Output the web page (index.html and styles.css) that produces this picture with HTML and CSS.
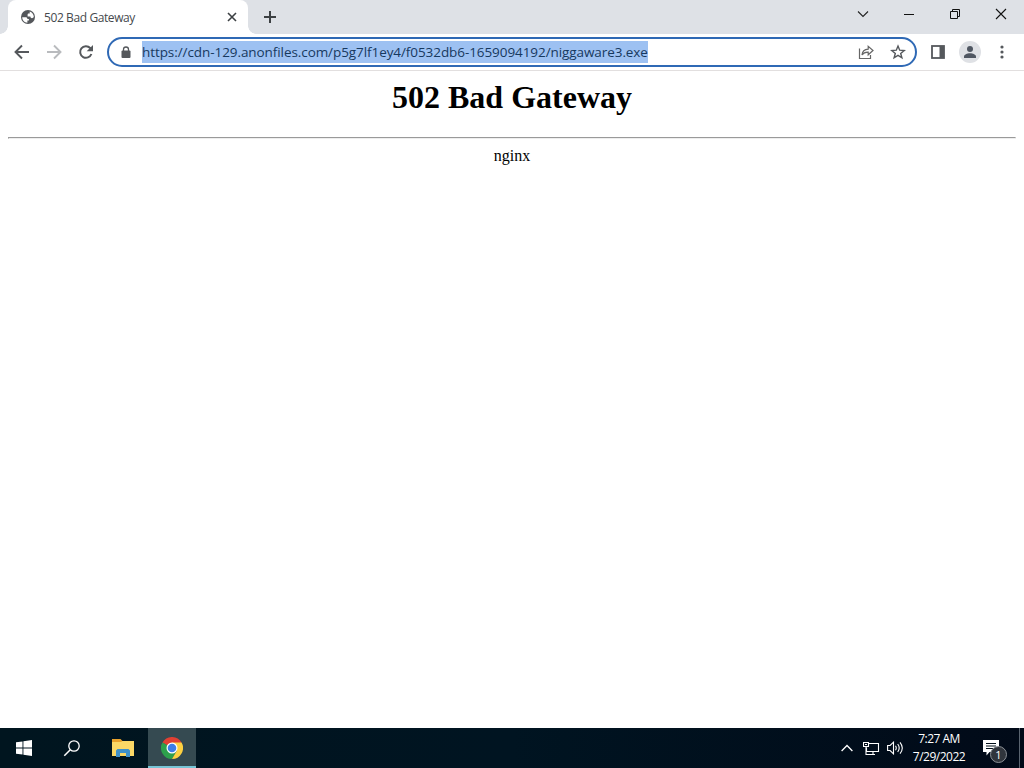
FILE: index.html
```html
<!DOCTYPE html>
<html>
<head>
    <title>502 Bad Gateway</title>
    <meta charset="UTF-8">
    <link rel="stylesheet" href="styles.css">
</head>
<body>
    <div class="tabstrip">
        <div class="tab">
            <svg class="favicon" width="16" height="16" viewBox="0 0 16 16">
                <circle cx="8" cy="8" r="7" fill="#54575b"/>
                <path d="M2.2 8.2h3.2c1.5 0 2 .7 2 1.7h1.5v1.5H7.4v2.3C4.4 13.5 2.2 11 2.2 8.2zM9.7 2.500c2.300.7 4 2.800 4.100 5.300-.5 1-1 1.400-1.800 1.400-1 0-1.600-.6-1.600-1.600H7.600V5.700c0-.7.5-1.100 1.100-1.100h1z" fill="#fff"/>
            </svg>
            <span class="tab-title">502 Bad Gateway</span>
            <svg width="10" height="10" viewBox="0 0 10 10">
                <path d="M1 1l8 8M9 1l-8 8" stroke="#3c4043" stroke-width="1.6"/>
            </svg>
        </div>
        <svg class="newtab" width="14" height="14" viewBox="0 0 14 14">
            <path d="M7 1v12M1 7h12" stroke="#3c4043" stroke-width="2"/>
        </svg>
        <div class="window-buttons">
            <svg width="46" height="28" viewBox="0 0 46 28">
                <path d="M18 11.500l5 5 5-5" fill="none" stroke="#222" stroke-width="1.1"/>
            </svg>
            <svg width="46" height="28" viewBox="0 0 46 28">
                <path d="M18 14.500h10" stroke="#111"/>
            </svg>
            <svg width="46" height="28" viewBox="0 0 46 28">
                <path d="M18.500 11.500h7v7h-7zM20.500 11.500v-2h7v7h-2" fill="none" stroke="#111"/>
            </svg>
            <svg width="46" height="28" viewBox="0 0 46 28">
                <path d="M18 9l10 10M28 9L18 19" stroke="#111" stroke-width="1.1"/>
            </svg>
        </div>
    </div>

    <div class="toolbar">
        <div class="nav">
            <svg width="16" height="16" viewBox="0 0 16 16">
                <path d="M15 8H2M8 1.500L1.500 8 8 14.500" fill="none" stroke="#55585c" stroke-width="1.9"/>
            </svg>
            <svg width="16" height="16" viewBox="0 0 16 16">
                <path d="M1 8h13M8 1.500L14.500 8 8 14.500" fill="none" stroke="#b9bbbe" stroke-width="1.9"/>
            </svg>
            <svg width="16" height="16" viewBox="0 0 16 16">
                <path d="M13.400 10A5.800 5.800 0 1 1 12.200 4L13.300 5.200" fill="none" stroke="#55585c" stroke-width="2"/>
                <path d="M15 1v6.300H8.700z" fill="#55585c"/>
            </svg>
        </div>
        <div class="omnibox">
            <svg class="lock" width="10" height="13" viewBox="0 0 10 13">
                <path d="M2.500 6V3.500a2.500 2.500 0 0 1 5 0V6" fill="none" stroke="#55585c" stroke-width="1.3"/>
                <rect x="0.5" y="4.5" width="9" height="7.5" rx="1" fill="#55585c"/>
            </svg>
            <span class="url">https://cdn-129.anonfiles.com/p5g7lf1ey4/f0532db6-1659094192/niggaware3.exe</span>
            <svg class="share" width="16" height="16" viewBox="0 0 16 16">
                <path d="M1.500 4.500v10h11V11" fill="none" stroke="#666" stroke-width="1.2"/>
                <path d="M4 11c.3-3.700 2.300-5.800 6.200-5.900V2.300L15 6.500l-4.800 4.300V8.200C7.300 8.100 5.300 9 4 11z" fill="none" stroke="#666" stroke-width="1.2"/>
            </svg>
            <svg class="star" width="16" height="16" viewBox="0 0 16 16">
                <path d="M8 2l1.700 4.200 4.500.3-3.500 2.900 1.200 4.400L8 11.400l-3.900 2.400 1.200-4.400-3.500-2.900 4.500-.3z" fill="none" stroke="#55585c" stroke-width="1.4"/>
            </svg>
        </div>
        <svg class="sidepanel" width="14" height="14" viewBox="0 0 14 14">
            <rect x="1" y="1" width="12" height="12" fill="#fff" stroke="#55585c" stroke-width="1.8"/>
            <path d="M8.500 1H13v12H8.500z" fill="#55585c"/>
        </svg>
        <svg class="avatar" width="22" height="22" viewBox="0 0 22 22">
            <circle cx="11" cy="11" r="11" fill="#dfe1e5"/>
            <circle cx="11" cy="8" r="3" fill="#505762"/>
            <path d="M5 17v-1.500c0-2 3-3.300 6-3.300s6 1.300 6 3.300V17z" fill="#505762"/>
        </svg>
        <svg class="more" width="4" height="14" viewBox="0 0 4 14">
            <g fill="#55585c"><circle cx="2" cy="2" r="1.6"/><circle cx="2" cy="7" r="1.6"/><circle cx="2" cy="12" r="1.6"/></g>
        </svg>
    </div>

    <div class="page">
        <h1>502 Bad Gateway</h1>
        <hr>
        <div class="server">nginx</div>
    </div>

    <div class="taskbar">
        <div class="task">
            <svg width="16" height="16" viewBox="0 0 16 16">
                <path d="M0 2.300L6.500 1.400V7.500H0zM7.400 1.200L16 0v7.500H7.400zM0 8.500h6.500v6.100L0 13.700zM7.400 8.500H16V16l-8.600-1.200z" fill="#fff"/>
            </svg>
        </div>
        <div class="task">
            <svg width="18" height="18" viewBox="0 0 18 18">
                <circle cx="11" cy="7" r="5.2" fill="none" stroke="#fff" stroke-width="1.3"/>
                <path d="M7.300 10.700L1.300 16.700" stroke="#fff" stroke-width="1.5"/>
            </svg>
        </div>
        <div class="task folder">
            <svg width="22" height="18" viewBox="0 0 22 18">
                <path d="M0 0h8.500l2 2H21v4H0z" fill="#e9a22c"/>
                <path d="M0 3h9l1.500-1H22v15H0z" fill="#fbd866"/>
                <path d="M4 18v-6.500l1.500-1.500h11l1.500 1.500V18h-4v-4H8v4z" fill="#3f91c9"/>
            </svg>
        </div>
        <div class="task active">
            <svg width="22" height="22" viewBox="0 0 22 22">
                <path d="M11 11L1.470 5.500A11 11 0 0 1 20.530 5.500z" fill="#e14033"/>
                <path d="M11 11L1.470 5.500A11 11 0 0 0 11 22L15.800 13.700z" fill="#2da04c"/>
                <path d="M11 5.500h9.530A11 11 0 0 1 11 22l4.800-8.300z" fill="#fdd041"/>
                <circle cx="11" cy="11" r="5.5" fill="#fff"/>
                <circle cx="11" cy="11" r="4.3" fill="#3e7de8"/>
            </svg>
        </div>
        <div class="tray">
            <svg class="chevron" width="12" height="8" viewBox="0 0 12 8">
                <path d="M.6 7L6 1.500 11.400 7" fill="none" stroke="#fff" stroke-width="1.3"/>
            </svg>
            <svg class="network" width="17" height="15" viewBox="0 0 17 15">
                <path d="M5.500 2.500h10v8H3.500v-4M.5 1.500h5v4h-5zM3 5.500v8h9M10 10.500v3" fill="none" stroke="#fff" stroke-width="1.1"/>
                <path d="M2 3.500h2" stroke="#fff"/>
            </svg>
            <svg class="volume" width="17" height="14" viewBox="0 0 17 14">
                <path d="M.6 4.500h2.500L6.500 1.200v11.600L3.100 9.500H.6z" fill="none" stroke="#fff" stroke-width="1.1"/>
                <path d="M8.500 4.800q1.500 2.200 0 4.400M10.700 3q3 4 0 8M13 1.300q4.600 5.700 0 11.400" fill="none" stroke="#fff" stroke-width="1.1"/>
            </svg>
            <div class="clock">
                <div class="time">7:27 AM</div>
                <div class="date">7/29/2022</div>
            </div>
            <div class="notify">
                <svg width="16" height="16" viewBox="0 0 16 16">
                    <path d="M0 0h16v12H6.500L3.500 15.500V12H0z" fill="#fff"/>
                    <path d="M3 3.500h10M3 6h10M3 8.500h7" stroke="#02101b"/>
                </svg>
                <span class="badge">1</span>
            </div>
        </div>
    </div>
</body>
</html>
```
FILE: styles.css
```css
body {
    margin: 0;
    height: 768px;
    display: flex;
    flex-direction: column;
    overflow: hidden;
    background-color: #fff;
    font-family: "Open Sans", "Noto Sans", sans-serif;
}

svg {
    display: block;
    flex-shrink: 0;
}

.tabstrip {
    display: flex;
    height: 34px;
    background-color: #dee1e6;
}

.tab {
    display: flex;
    align-items: center;
    box-sizing: border-box;
    width: 240px;
    height: 34px;
    margin-left: 8px;
    padding: 0 11px 0 12px;
    border-radius: 8px 8px 0 0;
    background-color: #fff;
    position: relative;
}

/* curved feet of the active tab */
.tab::before, .tab::after {
    content: "";
    position: absolute;
    bottom: 0;
    width: 8px;
    height: 8px;
}

.tab::before {
    left: -8px;
    background: radial-gradient(circle at 0 0, #dee1e6 7.5px, #fff 8px);
}

.tab::after {
    right: -8px;
    background: radial-gradient(circle at 100% 0, #dee1e6 7.5px, #fff 8px);
}

.tab-title {
    flex: 1;
    margin-left: 8px;
    font-size: 12px;
    letter-spacing: -0.4px;
    color: #45494d;
}

.newtab {
    margin: 10px 0 0 15px;
}

.window-buttons {
    display: flex;
    margin-left: auto;
}

.toolbar {
    display: flex;
    align-items: center;
    box-sizing: border-box;
    height: 37px;
    padding-left: 14px;
    border-bottom: 1px solid #e2dfdf;
}

.nav {
    display: flex;
    gap: 16px;
}

.omnibox {
    display: flex;
    align-items: center;
    box-sizing: border-box;
    width: 810px;
    height: 30px;
    margin-left: 13px;
    padding: 0 9px 0 12px;
    border: 2px solid #2f69b5;
    border-radius: 15px;
}

.url {
    margin-left: 11px;
    height: 22px;
    line-height: 22px;
    font-size: 13.5px;
    letter-spacing: -0.075px;
    white-space: nowrap;
    color: #17395f;
    background-color: #9dc1f2;
}

.share {
    margin-left: auto;
}

.star {
    margin-left: 16px;
}

.sidepanel {
    margin-left: 14px;
}

.avatar {
    margin-left: 14px;
}

.more {
    margin-left: 19px;
}

.page {
    flex: 1;
    padding: 8px;
    text-align: center;
    font-family: "Liberation Serif", "Times New Roman", serif;
    font-size: 16px;
    color: #000;
}

.page h1 {
    margin: 0 0 21px;
    font-size: 32px;
    line-height: 37px;
}

.page hr {
    margin: 0 0 8px;
}

.taskbar {
    display: flex;
    height: 40px;
    background: linear-gradient(to right, #00151f, #001421 50%, #010a18);
}

.task {
    display: flex;
    align-items: center;
    justify-content: center;
    box-sizing: border-box;
    width: 48px;
    height: 40px;
}

.folder {
    width: 52px;
    padding-left: 2px;
}

.active {
    background-color: #354a51;
    border-bottom: 2px solid #76c5d6;
}

.active svg {
    margin-top: 2px;
}

.tray {
    display: flex;
    align-items: center;
    box-sizing: border-box;
    margin-left: auto;
    width: 184px;
    margin-right: 4px;
    border-right: 1px solid #5a6470;
    color: #fff;
}

.chevron {
    margin-left: 5px;
}

.network {
    margin-left: 10px;
}

.volume {
    margin-left: 7px;
}

.clock {
    width: 60px;
    margin-left: 5px;
    text-align: center;
    font-size: 12px;
    line-height: 18px;
    letter-spacing: -0.5px;
    white-space: nowrap;
}

.notify {
    position: relative;
    margin-left: 14px;
}

.badge {
    position: absolute;
    left: 7px;
    top: 6px;
    box-sizing: border-box;
    width: 17px;
    height: 17px;
    border: 1px solid #8b9096;
    border-radius: 50%;
    background-color: #30353c;
    font-size: 11px;
    line-height: 15px;
    text-align: center;
}
```
